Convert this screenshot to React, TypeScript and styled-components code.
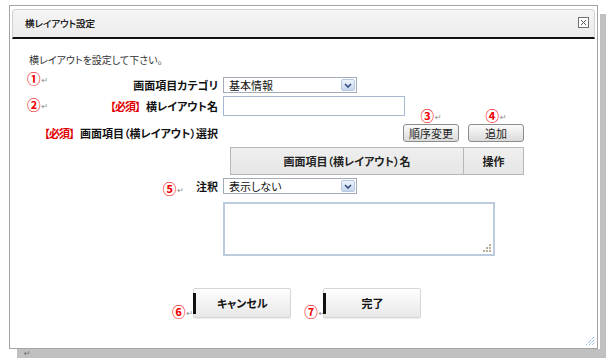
import React from "react";
import styled, { createGlobalStyle } from "styled-components";

const GlobalStyle = createGlobalStyle`
  html, body { margin: 0; padding: 0; background: #fff; }
  body {
    font-family: "Noto Sans CJK JP", "Noto Sans", sans-serif;
    font-size: 11px;
    color: #222;
    font-feature-settings: "palt";
  }
  * { box-sizing: border-box; }
`;

const Page = styled.div`
  width: 606px;
  height: 358px;
  padding: 5px 0 0 9px;
  overflow: hidden;
`;

const Frame = styled.div`
  position: relative;
  width: 589px;
  height: 344px;
  border: 1px solid #a3a3a3;
  padding: 3px 2px 0;
  display: flex;
  flex-direction: column;
  background: #fff;
  box-shadow: 2px 0 0 #fff, 8px 9px 0 #c0c0c0;
`;

const Header = styled.div`
  height: 30px;
  flex: none;
  display: flex;
  align-items: center;
  justify-content: space-between;
  padding: 0 5px 2px 12px;
  background: linear-gradient(#f5f5f5, #ececec);
  border: 1px solid #d2d2d2;
  border-bottom: 2px solid #111;
  border-radius: 4px 4px 0 0;
`;

const Title = styled.span`
  font-size: 9.5px;
  color: #000;
  -webkit-text-stroke: 0.2px #000;
`;

const CloseBox = styled.svg`
  width: 11px;
  height: 11px;
  display: block;
`;

const Body = styled.div`
  flex: 1;
  display: flex;
  flex-direction: column;
  padding-top: 14px;
`;

const Intro = styled.div`
  padding-left: 17px;
  font-size: 10px;
  line-height: 14px;
  color: #333;
`;

const FormRow = styled.div<{ $mt: number }>`
  display: grid;
  grid-template-columns: 206px auto;
  column-gap: 5px;
  align-items: center;
  justify-content: start;
  margin-top: ${(p) => p.$mt}px;
`;

const LabelCell = styled.div<{ $justify?: string; $gap?: number }>`
  display: flex;
  align-items: center;
  justify-content: ${(p) => p.$justify || "flex-end"};
  gap: ${(p) => p.$gap || 0}px;
  padding-left: 15px;
  font-weight: bold;
  color: #111;
  white-space: nowrap;
`;

const Required = styled.span`
  color: #e00000;
  font-weight: bold;
  font-feature-settings: normal;
  letter-spacing: -1px;
  margin-right: 1px;
`;

const NoteWrap = styled.span<{ $raise?: number }>`
  display: inline-flex;
  align-items: flex-end;
  font-weight: normal;
  transform: translateY(${(p) => -(p.$raise || 0)}px);
`;

const Circled = styled.span`
  font-family: "Noto Sans CJK JP", sans-serif;
  font-size: 13.5px;
  font-weight: bold;
  line-height: 13px;
  color: #f00000;
`;

const Ret = styled.span`
  font-family: "DejaVu Sans", sans-serif;
  font-size: 8px;
  line-height: 8px;
  color: #8a8a8a;
  margin-left: 1px;
`;

const SelectBox = styled.div<{ $w: number }>`
  width: ${(p) => p.$w}px;
  height: 16px;
  border: 1px solid #a2abb7;
  display: flex;
  align-items: center;
  justify-content: space-between;
  padding: 0 1px 0 5px;
  background: #fff;
  color: #111;
`;

const SelectArrow = styled.span`
  width: 14px;
  height: 12px;
  border: 1px solid #b7c8e2;
  border-radius: 2px;
  background: linear-gradient(#eef3fb, #c5d5ee);
  display: flex;
  align-items: center;
  justify-content: center;
`;

const TextInput = styled.div`
  width: 182px;
  height: 20px;
  border: 1px solid #a6b9d0;
  background: #fff;
`;

const ButtonGroup = styled.div`
  width: 301px;
  display: flex;
  justify-content: flex-end;
  gap: 9px;
`;

const SmallButton = styled.button`
  position: relative;
  width: 56px;
  height: 18px;
  padding: 0;
  border: 1px solid #8c8c8c;
  border-radius: 3px;
  background: linear-gradient(#fbfbfb, #dadada);
  font: inherit;
  font-size: 11px;
  line-height: 16px;
  color: #222;
`;

const AboveNote = styled.span`
  position: absolute;
  bottom: 100%;
  left: 50%;
  margin-bottom: 3px;
  transform: translateX(-50%);
  display: flex;
`;

const Table = styled.div`
  margin-top: 5px;
  margin-left: 218px;
  width: 294px;
  height: 28px;
  display: grid;
  grid-template-columns: 232px 1fr;
  border: 1px solid #b7b7b7;
  background: linear-gradient(#efefef, #e6e6e6);
  font-weight: bold;
  color: #222;
`;

const Th = styled.div<{ $divider?: boolean }>`
  display: flex;
  align-items: center;
  justify-content: center;
  border-left: ${(p) => (p.$divider ? "1px solid #b7b7b7" : "none")};
`;

const TextArea = styled.div`
  position: relative;
  margin-top: 8px;
  margin-left: 211px;
  width: 272px;
  height: 54px;
  border: 2px solid #bccbdd;
  background: #fff;
`;

const Grip = styled.svg`
  position: absolute;
  right: 2px;
  bottom: 2px;
  width: 8px;
  height: 8px;
`;

const ActionRow = styled.div`
  margin-top: 32px;
  padding-left: 160px;
  display: flex;
  align-items: flex-end;
`;

const BigButton = styled.button<{ $ml: number }>`
  position: relative;
  margin-left: ${(p) => p.$ml}px;
  width: 98px;
  height: 30px;
  padding: 0;
  border: 1px solid #d6d6d6;
  border-radius: 2px;
  background: linear-gradient(#fefefe, #e8e8e8);
  box-shadow: 0 1px 1px rgba(0, 0, 0, 0.08);
  font: inherit;
  font-size: 11px;
  font-weight: bold;
  color: #111;
  &::before {
    content: "";
    position: absolute;
    left: -1px;
    top: 4px;
    width: 3px;
    height: 21px;
    background: #111;
  }
`;

const Spacer = styled.span<{ $w: number }>`
  width: ${(p) => p.$w}px;
  flex: none;
`;

const CornerGrip = styled.svg`
  position: absolute;
  right: 2px;
  bottom: 2px;
  width: 11px;
  height: 11px;
`;

const ParaMark = styled.div`
  position: relative;
  padding-left: 15px;
  height: 9px;
  font-family: "DejaVu Sans", sans-serif;
  font-size: 8px;
  line-height: 9px;
  color: #6f6f6f;
`;

const Note: React.FC<{ n: string; raise?: number }> = ({ n, raise }) => (
  <NoteWrap $raise={raise}>
    <Circled>{n}</Circled>
    <Ret>↵</Ret>
  </NoteWrap>
);

const Chevron = () => (
  <svg width="8" height="5" viewBox="0 0 8 5">
    <path d="M1 1 L4 4 L7 1" fill="none" stroke="#2b4877" strokeWidth="1.5" />
  </svg>
);

const Select: React.FC<{ w: number; value: string }> = ({ w, value }) => (
  <SelectBox $w={w}>
    <span>{value}</span>
    <SelectArrow>
      <Chevron />
    </SelectArrow>
  </SelectBox>
);

export default function App() {
  return (
    <>
      <GlobalStyle />
      <Page>
        <Frame>
          <Header>
            <Title>横レイアウト設定</Title>
            <CloseBox viewBox="0 0 11 11">
              <rect x="0.5" y="0.5" width="10" height="10" fill="#fff" stroke="#707070" />
              <path d="M3 3 L8 8 M8 3 L3 8" stroke="#555" strokeWidth="1" />
            </CloseBox>
          </Header>
          <Body>
            <Intro>横レイアウトを設定して下さい。</Intro>

            <FormRow $mt={10}>
              <LabelCell $justify="space-between">
                <Note n="①" raise={7} />
                <span>画面項目カテゴリ</span>
              </LabelCell>
              <Select w={134} value="基本情報" />
            </FormRow>

            <FormRow $mt={3}>
              <LabelCell $justify="space-between">
                <Note n="②" raise={2} />
                <span>
                  <Required>【必須】</Required>横レイアウト名
                </span>
              </LabelCell>
              <TextInput />
            </FormRow>

            <FormRow $mt={8}>
              <LabelCell>
                <span>
                  <Required>【必須】</Required>画面項目（横レイアウト）選択
                </span>
              </LabelCell>
              <ButtonGroup>
                <SmallButton>
                  <AboveNote>
                    <Note n="③" />
                  </AboveNote>
                  順序変更
                </SmallButton>
                <SmallButton>
                  <AboveNote>
                    <Note n="④" />
                  </AboveNote>
                  追加
                </SmallButton>
              </ButtonGroup>
            </FormRow>

            <Table>
              <Th>画面項目（横レイアウト）名</Th>
              <Th $divider>操作</Th>
            </Table>

            <FormRow $mt={3}>
              <LabelCell $gap={12}>
                <Note n="⑤" raise={-2} />
                <span>注釈</span>
              </LabelCell>
              <Select w={134} value="表示しない" />
            </FormRow>

            <TextArea>
              <Grip viewBox="0 0 8 8">
                <rect x="6" y="0" width="2" height="2" fill="#b9b29a" />
                <rect x="3" y="3" width="2" height="2" fill="#b9b29a" />
                <rect x="6" y="3" width="2" height="2" fill="#b9b29a" />
                <rect x="0" y="6" width="2" height="2" fill="#b9b29a" />
                <rect x="3" y="6" width="2" height="2" fill="#b9b29a" />
                <rect x="6" y="6" width="2" height="2" fill="#b9b29a" />
              </Grip>
            </TextArea>

            <ActionRow>
              <Note n="⑥" />
              <BigButton $ml={0}>キャンセル</BigButton>
              <Spacer $w={13} />
              <Note n="⑦" />
              <BigButton $ml={-2}>完了</BigButton>
            </ActionRow>
          </Body>
          <CornerGrip viewBox="0 0 11 11">
            <path
              d="M10 2 L2 10 M10 5 L5 10 M10 8 L8 10"
              stroke="#5f93e6"
              strokeWidth="1"
              strokeDasharray="1 1"
            />
          </CornerGrip>
        </Frame>
        <ParaMark>↵</ParaMark>
      </Page>
    </>
  );
}
